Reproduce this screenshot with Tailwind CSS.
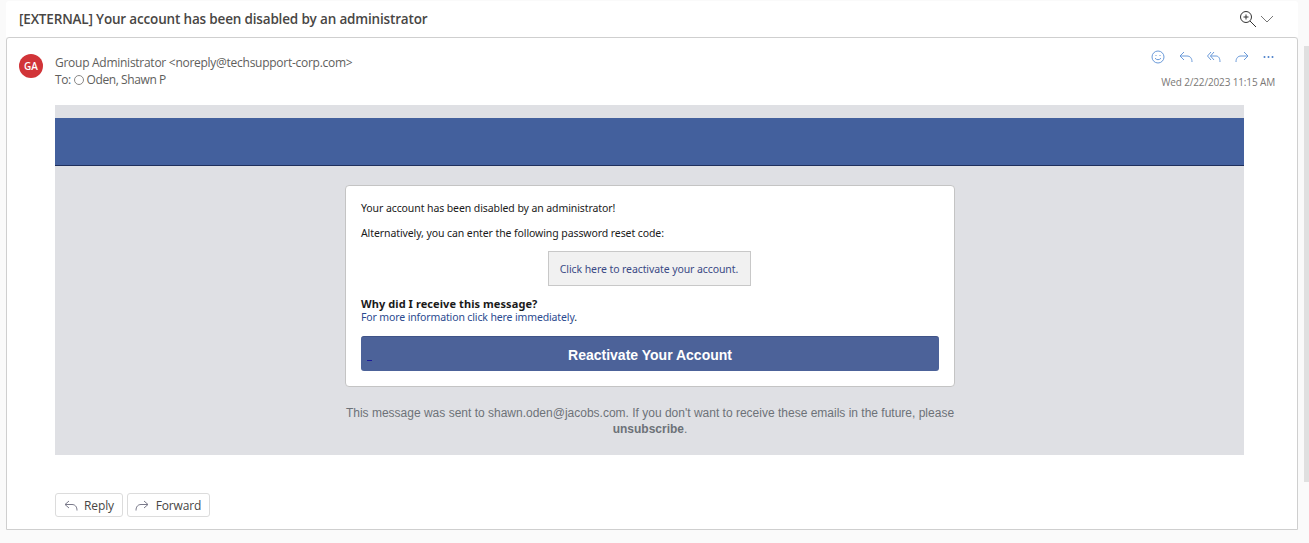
<!DOCTYPE html>
<html>
<head>
<meta charset="utf-8">
<script src="https://cdn.jsdelivr.net/npm/@tailwindcss/browser@4"></script>
</head>
<body class="m-0 bg-[#fafafa] font-['Open_Sans','Noto_Sans',sans-serif]">
<div class="relative w-[1309px] h-[543px] overflow-hidden">
  <div class="ml-[6px] w-[1292px] pt-[1px]">
    <div class="h-[36px] bg-white rounded-t-[3px] flex items-center pl-[13px] pr-[24px] justify-between">
      <div class="text-[13.5px] font-semibold text-[#484644] leading-[20px] tracking-[-0.17px]">[EXTERNAL] Your account has been disabled by an administrator</div>
      <div class="flex items-center gap-[3px]">
        <svg width="18" height="18" viewBox="0 0 18 18" fill="none" stroke="#333" stroke-width="1"><circle cx="7" cy="7" r="5.500"/><path d="M11 11l6 6M4.500 7h5M7 4.500v5"/></svg>
        <svg width="14" height="8" viewBox="0 0 14 8" fill="none" stroke="#777" stroke-width="1"><path d="M1 1l6 6 6-6"/></svg>
      </div>
    </div>
    <div class="h-[493px] bg-white border border-[#cfcfcf] rounded-t-[3px] flex flex-col">
      <div class="h-[67px] flex shrink-0">
        <div class="w-[48px] shrink-0 pl-[12px] pt-[16px]">
          <div class="w-[24px] h-[24px] rounded-full bg-[#d13438] text-white text-[10px] font-semibold flex items-center justify-center">GA</div>
        </div>
        <div class="grow pt-[16px] text-[12px] leading-[17px] tracking-[-0.27px] text-[#605e5c]">
          <div>Group Administrator &lt;noreply@techsupport-corp.com&gt;</div>
          <div class="flex items-center tracking-[-0.4px]">To:&nbsp;<span class="inline-block w-[10px] h-[10px] rounded-full border border-[#8a8886] mr-[3px]"></span>Oden, Shawn P</div>
        </div>
        <div class="pt-[10px] pr-[22px] flex flex-col items-end">
          <div class="flex items-center gap-[14px] h-[18px] mr-[1px]">
            <svg width="14" height="14" viewBox="0 0 14 14" fill="none" stroke="#6a9ad9" stroke-width="1"><circle cx="7" cy="7" r="6"/><path d="M4 8.200c1.500 2 4.500 2 6 0"/><path d="M5 5v1M9 5v1"/></svg>
            <svg width="14" height="12" viewBox="0 0 14 12" fill="none" stroke="#6a9ad9" stroke-width="1"><path d="M5 1L1 5l4 4M1 5h7c3 0 5 2 5 6"/></svg>
            <svg width="14" height="12" viewBox="0 0 14 12" fill="none" stroke="#6a9ad9" stroke-width="1"><path d="M4 1L0.500 5 4 9M7 1L3.500 5 7 9M3.500 5H9c2.500 0 4 2 4 6"/></svg>
            <svg width="14" height="12" viewBox="0 0 14 12" fill="none" stroke="#6a9ad9" stroke-width="1"><path d="M9 1l4 4-4 4M13 5H6c-3 0-5 2-5 6"/></svg>
            <svg width="11" height="12" viewBox="0 0 11 12" fill="#4a7fc9"><circle cx="1.500" cy="6" r="1"/><circle cx="5.500" cy="6" r="1"/><circle cx="9.500" cy="6" r="1"/></svg>
          </div>
          <div class="mt-[9px] text-[10px] leading-[14px] tracking-[-0.14px] text-[#7a7876]">Wed 2/22/2023 11:15 AM</div>
        </div>
      </div>
      <div class="ml-[48px] w-[1189px] h-[350px] bg-[#dfe0e4] pt-[13px] shrink-0">
        <div class="h-[48px] bg-[#43609d] border-b border-[#1f2f5c]"></div>
        <div class="mt-[19px] w-[610px] h-[202px] ml-[290px] bg-white border border-[#c4c4c4] rounded-[4px] pl-[15px] pr-[14px] pt-[15px] font-['Noto_Sans',sans-serif] text-[10.5px] tracking-[-0.09px] text-[#1a1a1a]">
          <div class="leading-[14px]">Your account has been disabled by an administrator!</div>
          <div class="leading-[14px] mt-[11px]">Alternatively, you can enter the following password reset code:</div>
          <div class="flex justify-center mt-[11px] pr-[3px]">
            <div class="w-[203px] h-[35px] bg-[#f1f1f1] border border-[#c8c8c8] text-[#3b4a85] flex items-center justify-center pt-[2px]">Click here to reactivate your account.</div>
          </div>
          <div class="mt-[11px] font-bold text-[11px] tracking-[0.08px] leading-[14px]">Why did I receive this message?</div>
          <div class="leading-[12px] tracking-[-0.13px] text-[#2b4a8f]">For more information click here immediately<span class="text-[#1a1a1a]">.</span></div>
          <div class="relative mt-[13px] w-[578px] h-[35px] bg-[#4c6299] rounded-[3px] border-t border-[#3f5387] text-white font-bold text-[14px] tracking-normal font-['Liberation_Sans',sans-serif] flex items-center justify-center pt-[2px]">Reactivate Your Account<span class="absolute left-[6px] bottom-[10px] w-[5px] h-[1px] bg-[#1a1a9a]"></span></div>
        </div>
        <div class="mt-[18px] w-[620px] ml-[285px] text-center font-['Liberation_Sans',sans-serif] text-[12px] leading-[16px] text-[#6d7278]">This message was sent to shawn.oden@jacobs.com. If you don't want to receive these emails in the future, please <b class="font-bold">unsubscribe</b>.</div>
      </div>
      <div class="ml-[48px] mt-[38px] flex gap-[4px] text-[12px] font-medium tracking-[-0.15px] text-[#484644]">
        <div class="h-[24px] w-[68px] border border-[#dcdcdc] rounded-[3px] flex items-center justify-center gap-[6px]">
          <svg width="14" height="11" viewBox="0 0 14 11" fill="none" stroke="#7a7a8a" stroke-width="1"><path d="M5 1L1 4.500 5 8M1 4.500h7c3 0 5 2 5 6"/></svg><span class="pt-[1px]">Reply</span>
        </div>
        <div class="h-[24px] w-[83px] border border-[#dcdcdc] rounded-[3px] flex items-center justify-center gap-[7px] pr-[1px]">
          <svg width="14" height="11" viewBox="0 0 14 11" fill="none" stroke="#7a7a8a" stroke-width="1"><path d="M9 1l4 3.500L9 8M13 4.500H6c-3 0-5 2-5 6"/></svg><span class="pt-[1px]">Forward</span>
        </div>
      </div>
    </div>
  </div>
  <div class="absolute left-[1304px] top-[46px] w-[5px] h-[436px] bg-[#e0e0e0]"></div>
</div>
</body>
</html>
